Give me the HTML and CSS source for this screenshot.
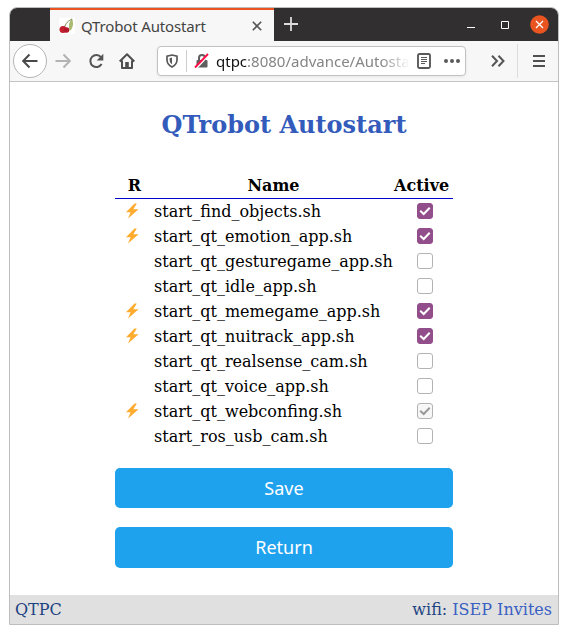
FILE: index.html
```html
<!DOCTYPE html>
<html lang="en">
<head>
<meta charset="utf-8">
<title>QTrobot Autostart</title>
<link rel="stylesheet" href="styles.css">
</head>
<body>
<svg class="defs" width="0" height="0">
  <symbol id="bolt" viewBox="0 0 14 16"><path d="M9.5 0.5 1 9.2h4.6L3 15.5 13.6 6.2H8.3L11.8.5z" fill="#ffab2e"/></symbol>
  <symbol id="check" viewBox="0 0 16 16"><path d="M3.2 7.7 6.7 11l6-6.2" fill="none" stroke="currentColor" stroke-width="2"/></symbol>
</svg>
<div class="window">
  <header class="titlebar">
    <div class="tab">
      <svg class="favicon" width="16" height="16" viewBox="0 0 16 16"><path d="M0 0h16v16H0z" fill="#fff"/><path d="M5 10C7 5 9 3 13 1M11 10Q10 5 13 1" fill="none" stroke="#71803f"/><path d="M13 1c2 4 1 9-2 12-2-4-1-8 2-12z" fill="#a9bd72"/><circle cx="4" cy="11.5" r="3.5" fill="#c3202f"/><circle cx="7.5" cy="12" r="2.8" fill="#b5182c"/></svg>
      <span class="tab-title">QTrobot Autostart</span>
      <svg class="tab-close" width="10" height="10" viewBox="0 0 10 10"><path d="m.8.8 8.4 8.4M9.2.8.8 9.2" stroke="#555" stroke-width="1.6"/></svg>
    </div>
    <svg class="plus" width="14" height="14" viewBox="0 0 14 14"><path d="M7 0v14M0 7h14" stroke="#ddd" stroke-width="1.8"/></svg>
    <div class="controls">
      <svg width="8" height="8" viewBox="0 0 8 8"><path d="M0 6.5h8" stroke="#fff"/></svg>
      <svg width="8" height="8" viewBox="0 0 8 8"><path d="M.5.5h7v7h-7z" fill="none" stroke="#fff"/></svg>
      <svg width="19" height="19" viewBox="0 0 19 19"><circle cx="9.5" cy="9.5" r="9.3" fill="#e95420"/><path d="m6 6 7 7m0-7-7 7" stroke="#fff" stroke-width="1.3"/></svg>
    </div>
  </header>
  <nav class="toolbar">
    <span class="back"><svg width="16" height="16" viewBox="0 0 16 16"><path d="M15.5 8H1.5M7.5 1.5 1.2 8l6.3 6.5" fill="none" stroke="#4a4a4a" stroke-width="2"/></svg></span>
    <svg class="forward" width="16" height="16" viewBox="0 0 16 16"><path d="M.5 8h14M8.5 1.5 14.8 8l-6.3 6.5" fill="none" stroke="#b3b3b3" stroke-width="2"/></svg>
    <svg class="reload" width="16" height="16" viewBox="0 0 16 16"><path d="M13 4.2A6 6 0 1 0 13.6 11" fill="none" stroke="#555" stroke-width="2"/><path d="M15.3.8v6.6H8.7z" fill="#555"/></svg>
    <svg class="home" width="16" height="16" viewBox="0 0 16 16"><path d="M.7 8.5 8 1.3l7.3 7.2M3 7.5V15h10V7.5" fill="none" stroke="#4f4f4f" stroke-width="2" stroke-linejoin="round"/><path d="M6.2 15V9h3.6v6z" fill="#4f4f4f"/></svg>
    <div class="address">
      <svg class="shield" width="12" height="14" viewBox="0 0 12 14"><path d="M6 1 11 2.2V6c0 3.5-2 5.5-5 7-3-1.500-5-3.500-5-7V2.200z" fill="none" stroke="#5a5a5a" stroke-width="1.700"/><path d="M6 3.600v6.600C4.500 9.200 3.600 8 3.600 6V4.200z" fill="#5a5a5a"/></svg>
      <i class="divider"></i>
      <svg class="lock" width="16" height="16" viewBox="0 0 16 16"><path d="M5 8V5a3 3 0 0 1 6 0v3" fill="none" stroke="#5f5f5f" stroke-width="2"/><rect x="2.500" y="7" width="11" height="7.500" rx="1" fill="#5f5f5f"/><path d="M2 15.500 15 1.500" stroke="#fff" stroke-width="2"/><path d="M1 14.500 14 1" stroke="#ff0f48" stroke-width="1.900"/></svg>
      <span class="url"><b>qtpc</b>:8080/advance/Autostart</span>
      <svg class="reader" width="14" height="16" viewBox="0 0 14 16"><rect x="1" y="1" width="12" height="14" rx="1.500" fill="none" stroke="#5a5a5a" stroke-width="1.900"/><path d="M4 4.500h6M4 6.500h6M4 8.500h6M4 10.500h4" stroke="#5a5a5a"/></svg>
      <svg class="dots" width="16" height="4" viewBox="0 0 16 4" fill="#5a5a5a"><circle cx="2" cy="2" r="2"/><circle cx="8" cy="2" r="2"/><circle cx="14" cy="2" r="2"/></svg>
    </div>
    <svg class="more" width="14" height="12" viewBox="0 0 14 12"><path d="m1 .8 5 5.200-5 5.200M7.500.8l5 5.200-5 5.200" fill="none" stroke="#555" stroke-width="2"/></svg>
    <i class="separator"></i>
    <svg class="menu" width="12" height="12" viewBox="0 0 12 12"><path d="M0 1h12M0 6h12M0 11h12" stroke="#505050" stroke-width="2"/></svg>
  </nav>
  <main>
    <h1><span>QTrobot Autostart</span></h1>
    <table>
      <thead><tr><th class="r">R</th><th>Name</th><th class="active">Active</th></tr></thead>
      <tbody>
        <tr><td><svg class="bolt"><use href="#bolt"/></svg></td><td class="name">start_find_objects.sh</td><td><span class="box on"><svg><use href="#check"/></svg></span></td></tr>
        <tr><td><svg class="bolt"><use href="#bolt"/></svg></td><td class="name">start_qt_emotion_app.sh</td><td><span class="box on"><svg><use href="#check"/></svg></span></td></tr>
        <tr><td></td><td class="name">start_qt_gesturegame_app.sh</td><td><span class="box"></span></td></tr>
        <tr><td></td><td class="name">start_qt_idle_app.sh</td><td><span class="box"></span></td></tr>
        <tr><td><svg class="bolt"><use href="#bolt"/></svg></td><td class="name">start_qt_memegame_app.sh</td><td><span class="box on"><svg><use href="#check"/></svg></span></td></tr>
        <tr><td><svg class="bolt"><use href="#bolt"/></svg></td><td class="name">start_qt_nuitrack_app.sh</td><td><span class="box on"><svg><use href="#check"/></svg></span></td></tr>
        <tr><td></td><td class="name">start_qt_realsense_cam.sh</td><td><span class="box"></span></td></tr>
        <tr><td></td><td class="name">start_qt_voice_app.sh</td><td><span class="box"></span></td></tr>
        <tr><td><svg class="bolt"><use href="#bolt"/></svg></td><td class="name">start_qt_webconfing.sh</td><td><span class="box disabled"><svg><use href="#check"/></svg></span></td></tr>
        <tr><td></td><td class="name">start_ros_usb_cam.sh</td><td><span class="box"></span></td></tr>
      </tbody>
    </table>
    <button class="save">Save</button>
    <button class="return">Return</button>
  </main>
  <footer><span>QTPC</span><span>wifi: <a>ISEP Invites</a></span></footer>
</div>
</body>
</html>
```
FILE: styles.css
```css
* { box-sizing: border-box; }
body { margin: 0; padding: 7px 9px; background: #fff; font: 16px "DejaVu Serif", serif; }
svg { display: block; flex: none; }
.defs { position: absolute; }
.window { width: 550px; height: 618px; border: 1px solid #bdbdbd; border-radius: 8px 8px 0 0; overflow: hidden; display: flex; flex-direction: column; }
.titlebar { height: 33px; flex: none; background: #322f30; display: flex; align-items: center; }
.tab { width: 224px; height: 33px; margin-left: 40px; border-top: 2px solid #e95420; background: #f7f7f7; display: flex; align-items: center; padding: 0 12px 0 9px; }
.tab-title { font: 15px "Noto Sans", sans-serif; color: #444; margin-left: 6px; flex: 1; white-space: nowrap; letter-spacing: -.15px; }
.plus { margin-left: 10px; margin-top: -1px; }
.controls { margin-left: auto; margin-right: 9px; display: flex; align-items: center; gap: 26px; }
.controls svg:last-child { margin-left: -5px; }
.toolbar { height: 41px; flex: none; background: #f7f7f7; border-bottom: 1px solid #c4c4c4; display: flex; align-items: center; padding-left: 3px; }
.back { width: 34px; height: 34px; border: 1px solid #b5b5b5; border-radius: 50%; background: #fff; display: flex; align-items: center; justify-content: center; }
.forward { margin-left: 8px; }
.reload { margin-left: 17px; }
.home { margin-left: 15px; }
.address { width: 309px; height: 30px; margin-left: 22px; background: #fff; border: 1px solid #c2c2c2; border-radius: 4px; box-shadow: 0 1px 3px #0001; display: flex; align-items: center; padding-left: 8px; }
.divider { width: 1px; height: 22px; background: #ccc; margin: 0 7px 0 8px; }
.url { width: 194px; margin-left: 6px; overflow: hidden; white-space: nowrap; font: 15px/22px "Noto Sans", sans-serif; color: #858585; -webkit-mask-image: linear-gradient(90deg, #000 165px, transparent 194px); mask-image: linear-gradient(90deg, #000 165px, transparent 194px); }
.url b { font-weight: 400; color: #111; }
.reader { margin-left: 7px; }
.dots { margin-left: 13px; }
.more { margin-left: 25px; }
.separator { width: 1px; height: 34px; background: #ddd; margin-left: 12px; }
.menu { margin-left: 15px; }
main { flex: 1; display: flex; flex-direction: column; align-items: center; }
h1 { font-size: 24px; line-height: 28px; color: #335bbb; margin: 29px 0 36px; }
table { width: 338px; border-collapse: collapse; table-layout: fixed; }
th { height: 23px; padding: 0; line-height: 22px; border-bottom: 1px solid #00c; }
.r { width: 39px; }
.active { width: 62px; text-align: left; padding-left: 6px; }
td { height: 25px; padding: 0; line-height: 25px; }
thead .active { width: 60px; padding-left: 1px; }
.name { white-space: nowrap; }
.bolt { width: 14px; height: 16px; margin-left: 10px; }
.box { display: block; width: 16px; height: 16px; margin-left: 24px; border: 1px solid #b3b3b3; border-radius: 3px; }
.box svg { width: 16px; height: 16px; margin: -1px; }
.on { background: #924d8b; border-color: #924d8b; color: #fff; }
.disabled { background: #f7f7f7; color: #999; }
button { width: 338px; height: 40px; border: 0; padding: 0; border-radius: 5px; background: #1fa2ee; color: #fff; font: 18px "Noto Sans", sans-serif; }
.save { margin-top: 19px; }
.return { margin-top: 19px; height: 41px; }
footer { height: 29px; flex: none; background: #e0e0e0; color: #1d4382; display: flex; align-items: center; justify-content: space-between; padding: 0 6px 0 5px; }
footer a { color: #3a60c2; }
```
